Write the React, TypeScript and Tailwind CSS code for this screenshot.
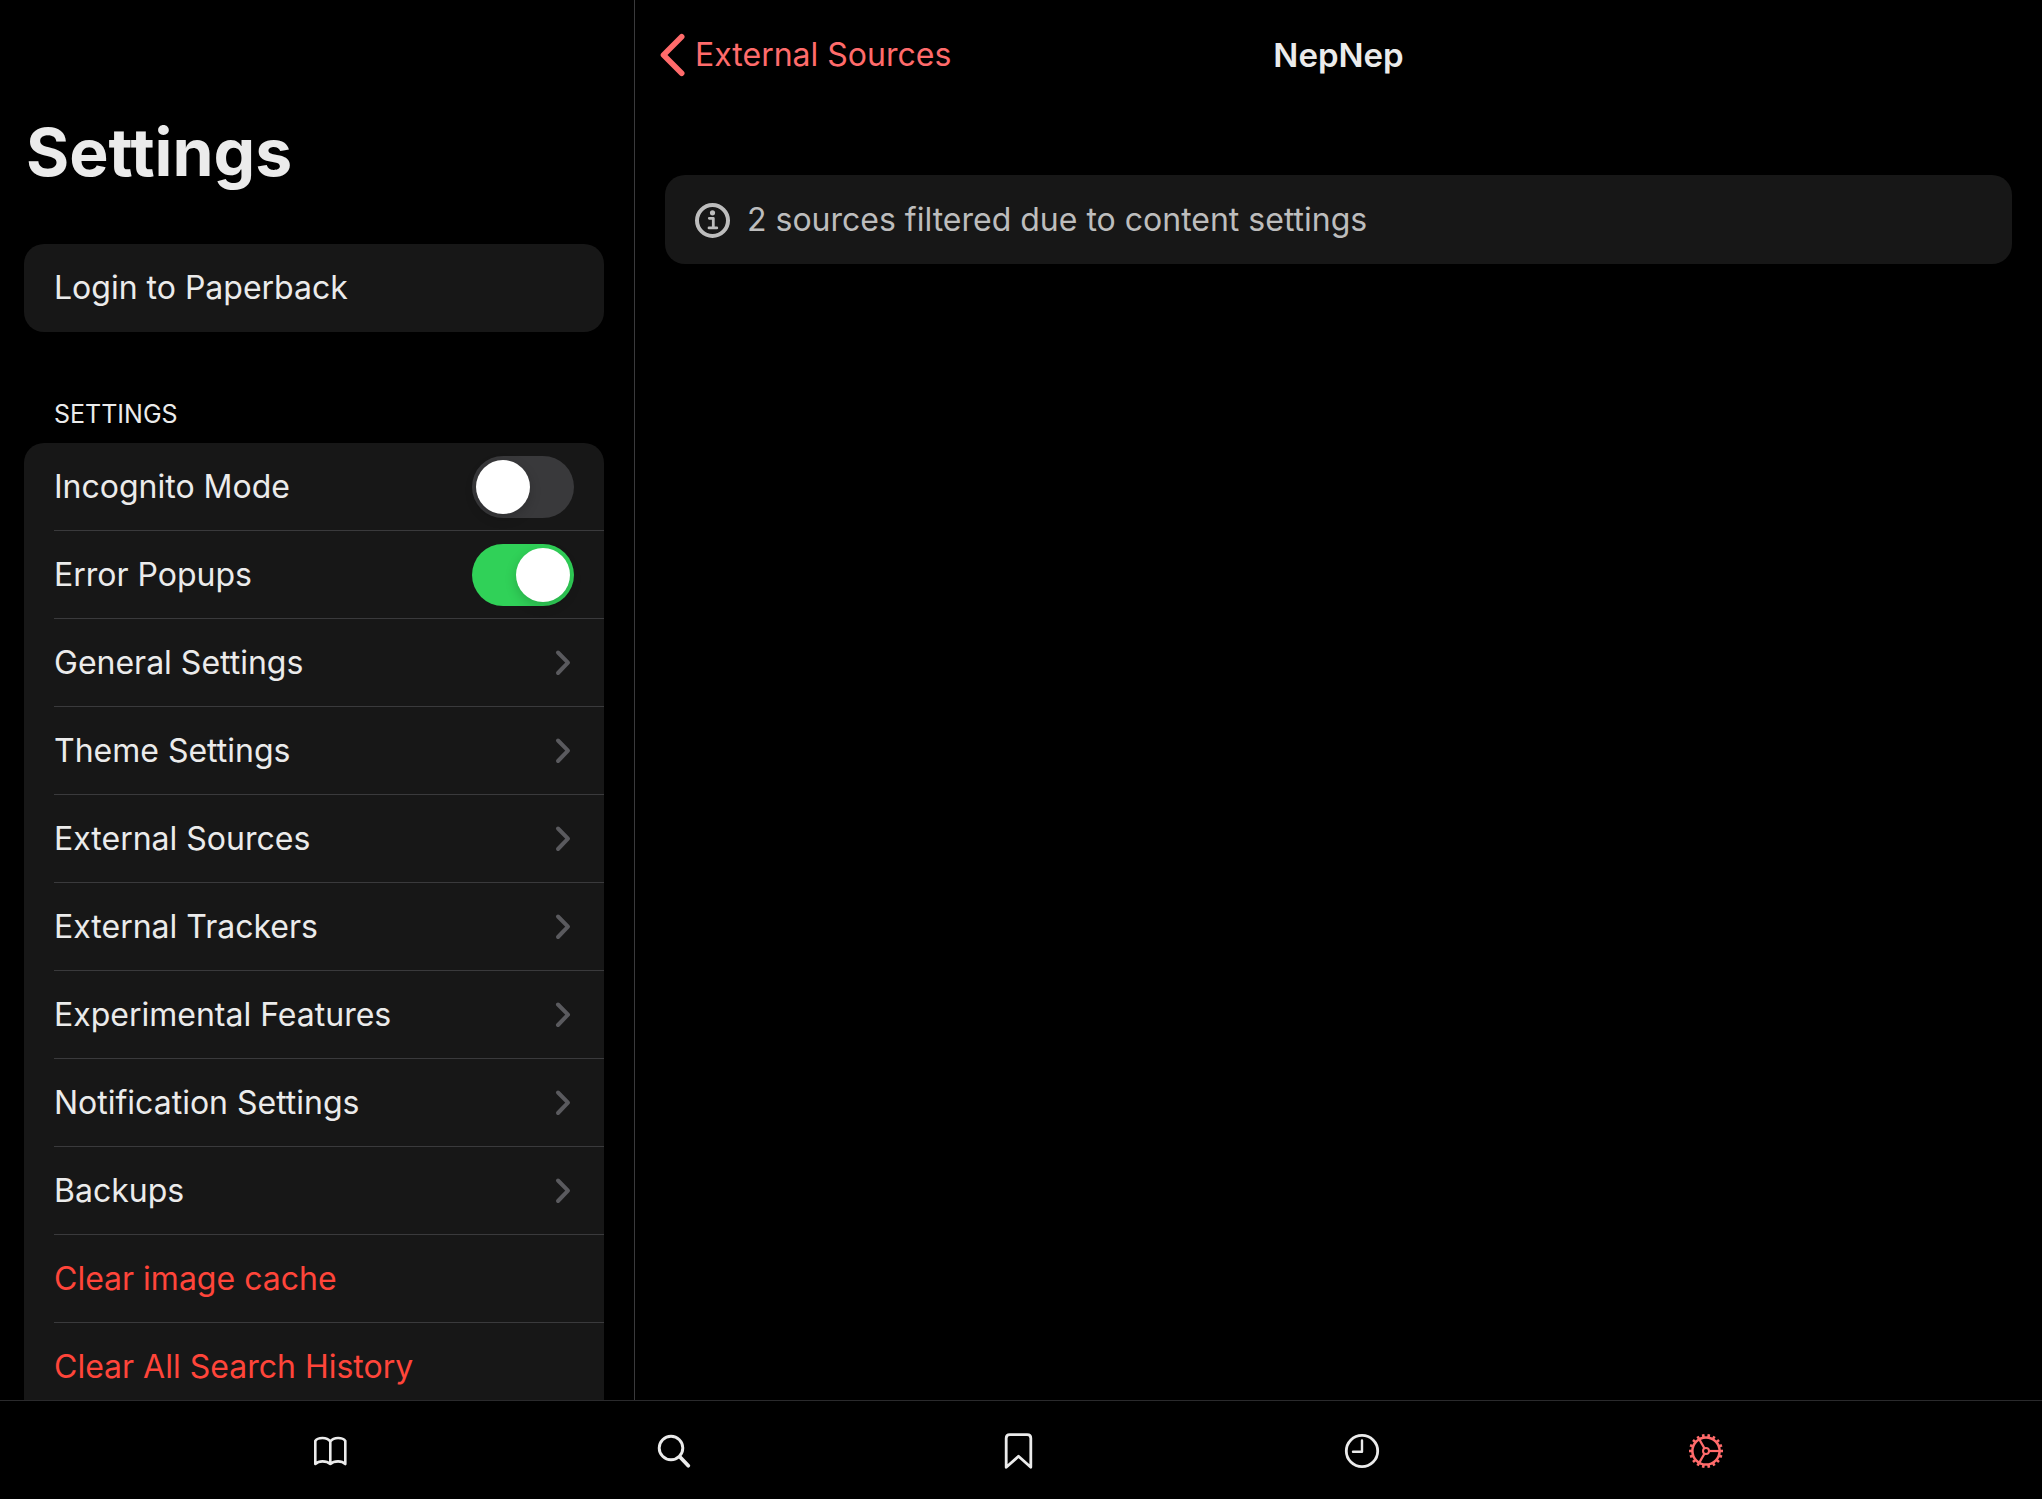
import { useState } from "react";
import type { ReactNode } from "react";

const links = [
  "General Settings",
  "Theme Settings",
  "External Sources",
  "External Trackers",
  "Experimental Features",
  "Notification Settings",
  "Backups",
];

const destructive = ["Clear image cache", "Clear All Search History"];

const gearTeeth = Array.from({ length: 18 }, (_, i) => i * 20);
const gearSpokes = [0, 120, 240];

function Chevron() {
  return (
    <svg className="mr-[3px] h-7 w-4" viewBox="0 0 16 28" fill="none" stroke="#5a5a5e" strokeWidth="4" strokeLinecap="round" strokeLinejoin="round" aria-hidden="true">
      <path d="M3 3.500 13 13.700 3 24" />
    </svg>
  );
}

function BackIcon() {
  return (
    <svg className="h-11 w-7" viewBox="0 0 28 44" fill="none" stroke="currentColor" strokeWidth="5.600" strokeLinecap="round" strokeLinejoin="round" aria-hidden="true">
      <path d="M22.700 3.700 4.500 22l18.200 18.300" />
    </svg>
  );
}

function InfoIcon() {
  return (
    <svg className="size-9 shrink-0" viewBox="0 0 36 36" fill="none" aria-hidden="true">
      <circle cx="17.500" cy="18.500" r="15.500" stroke="currentColor" strokeWidth="4" />
      <circle cx="17.500" cy="10.800" r="2.600" fill="currentColor" />
      <path d="M14.300 16.300h4v9M14 25.900h7.800" stroke="currentColor" strokeWidth="2.800" strokeLinecap="round" strokeLinejoin="round" />
    </svg>
  );
}

function BookIcon() {
  return (
    <svg className="size-10" viewBox="0 0 40 40" fill="none" stroke="currentColor" strokeWidth="2.600" strokeLinecap="round" strokeLinejoin="round" aria-hidden="true">
      <path d="M20.300 33V10.500C18.500 8 15.500 7 12.500 7 9.500 7 6.500 8 5.300 10v23c1.800-1.700 4.500-2.600 7.200-2.600 3 0 6 .9 7.800 2.600 1.800-1.700 4.800-2.600 7.800-2.600 2.700 0 5.400.9 7.200 2.600V10C34.100 8 31.100 7 28.100 7c-3 0-6 1-7.800 3.500" />
    </svg>
  );
}

function SearchIcon() {
  return (
    <svg className="size-10" viewBox="0 0 40 40" fill="none" stroke="currentColor" strokeLinecap="round" aria-hidden="true">
      <circle cx="17" cy="17" r="11.800" strokeWidth="2.900" />
      <path d="m26 26 8.300 8.700" strokeWidth="3.800" />
    </svg>
  );
}

function BookmarkIcon() {
  return (
    <svg className="size-10" viewBox="0 0 40 40" fill="none" stroke="currentColor" strokeWidth="2.800" strokeLinecap="round" strokeLinejoin="round" aria-hidden="true">
      <path d="M8.200 36.300V7.300c0-2.300 1.300-3.600 3.600-3.600h17.400c2.300 0 3.600 1.300 3.600 3.600v29L20.500 25.300Z" />
    </svg>
  );
}

function ClockIcon() {
  return (
    <svg className="size-10" viewBox="0 0 40 40" fill="none" stroke="currentColor" strokeWidth="2.800" strokeLinecap="round" strokeLinejoin="round" aria-hidden="true">
      <circle cx="20" cy="20" r="15.700" />
      <path d="M20 9.500v11.200H11" strokeWidth="2.400" />
    </svg>
  );
}

function GearIcon() {
  return (
    <svg className="size-10" viewBox="0 0 40 40" fill="none" stroke="currentColor" aria-hidden="true">
      <circle cx="20" cy="20" r="13.600" strokeWidth="2.500" />
      <circle cx="20" cy="20" r="3" strokeWidth="2" />
      {gearTeeth.map((a) => (
        <path key={a} d="M34 20h3" strokeWidth="2.600" transform={`rotate(${a} 20 20)`} />
      ))}
      {gearSpokes.map((a) => (
        <path key={a} d="M23 20h11" strokeWidth="2.200" transform={`rotate(${a} 20 20)`} />
      ))}
    </svg>
  );
}

const rowClass = "flex h-[87px] w-full items-center justify-between pr-[30px] text-left";
const dividerClass = "border-t border-[#3a3a3c]";

function ToggleRow({ label, initial, divided }: { label: string; initial: boolean; divided?: boolean }) {
  const [on, setOn] = useState(initial);
  return (
    <li className={divided ? dividerClass : ""}>
      <label className="flex h-[87px] items-center justify-between pr-[30px]">
        {label}
        <input
          type="checkbox"
          role="switch"
          checked={on}
          onChange={() => setOn(!on)}
          className="flex h-[62px] w-[102px] cursor-pointer appearance-none items-center rounded-full bg-[#39393b] p-1 before:size-[54px] before:rounded-full before:bg-white before:shadow-[0_4px_12px_rgba(0,0,0,0.18)] checked:justify-end checked:bg-[#30d158]"
        />
      </label>
    </li>
  );
}

function Tab({ label, active, children }: { label: string; active?: boolean; children: ReactNode }) {
  return (
    <button
      type="button"
      aria-label={label}
      aria-current={active ? "page" : undefined}
      className={active ? "flex h-full flex-1 items-center justify-center text-[#ff6b6b]" : "flex h-full flex-1 items-center justify-center"}
    >
      {children}
    </button>
  );
}

export default function App() {
  return (
    <div className="flex h-screen flex-col overflow-hidden bg-black font-['Inter',sans-serif] text-[32px] leading-10 text-[#ebebeb]">
      <div className="flex min-h-0 flex-1">
        <aside className="w-[635px] shrink-0 overflow-hidden border-r border-[#3a3a3c] pr-[30px] pl-6">
          <h1 className="pt-28 pl-0.5 text-[66px] leading-20 font-bold">Settings</h1>
          <button type="button" className="mt-[52px] flex h-[88px] w-full items-center rounded-[20px] bg-[#171717] px-[30px] text-left">
            Login to Paperback
          </button>
          <h2 className="mt-16 px-[30px] text-[25px] leading-9">SETTINGS</h2>
          <ul className="mt-[11px] rounded-[20px] bg-[#171717] pb-6 pl-[30px]">
            <ToggleRow label="Incognito Mode" initial={false} />
            <ToggleRow label="Error Popups" initial={true} divided />
            {links.map((label) => (
              <li key={label} className={dividerClass}>
                <button type="button" className={rowClass}>
                  {label}
                  <Chevron />
                </button>
              </li>
            ))}
            {destructive.map((label) => (
              <li key={label} className={dividerClass}>
                <button type="button" className={`${rowClass} text-[#ff453a]`}>
                  {label}
                </button>
              </li>
            ))}
          </ul>
        </aside>
        <main className="min-w-0 flex-1">
          <header className="grid h-[110px] grid-cols-[1fr_auto_1fr] items-center px-6">
            <button type="button" className="flex items-center gap-2 justify-self-start text-[#ff6b6b]">
              <BackIcon />
              External Sources
            </button>
            <h2 className="text-[33px] font-semibold">NepNep</h2>
          </header>
          <section className="mx-[30px] mt-[65px] flex h-[89px] items-center gap-4 rounded-[20px] bg-[#171717] px-[30px] text-[#bdbdbd]">
            <InfoIcon />
            <p>2 sources filtered due to content settings</p>
          </section>
        </main>
      </div>
      <nav className="flex h-[99px] shrink-0 items-center justify-center border-t border-[#2a2a2c] pt-0.5 pr-[164px] pl-[158px]">
        <Tab label="Library"><BookIcon /></Tab>
        <Tab label="Search"><SearchIcon /></Tab>
        <Tab label="Bookmarks"><BookmarkIcon /></Tab>
        <Tab label="History"><ClockIcon /></Tab>
        <Tab label="Settings" active><GearIcon /></Tab>
      </nav>
    </div>
  );
}
